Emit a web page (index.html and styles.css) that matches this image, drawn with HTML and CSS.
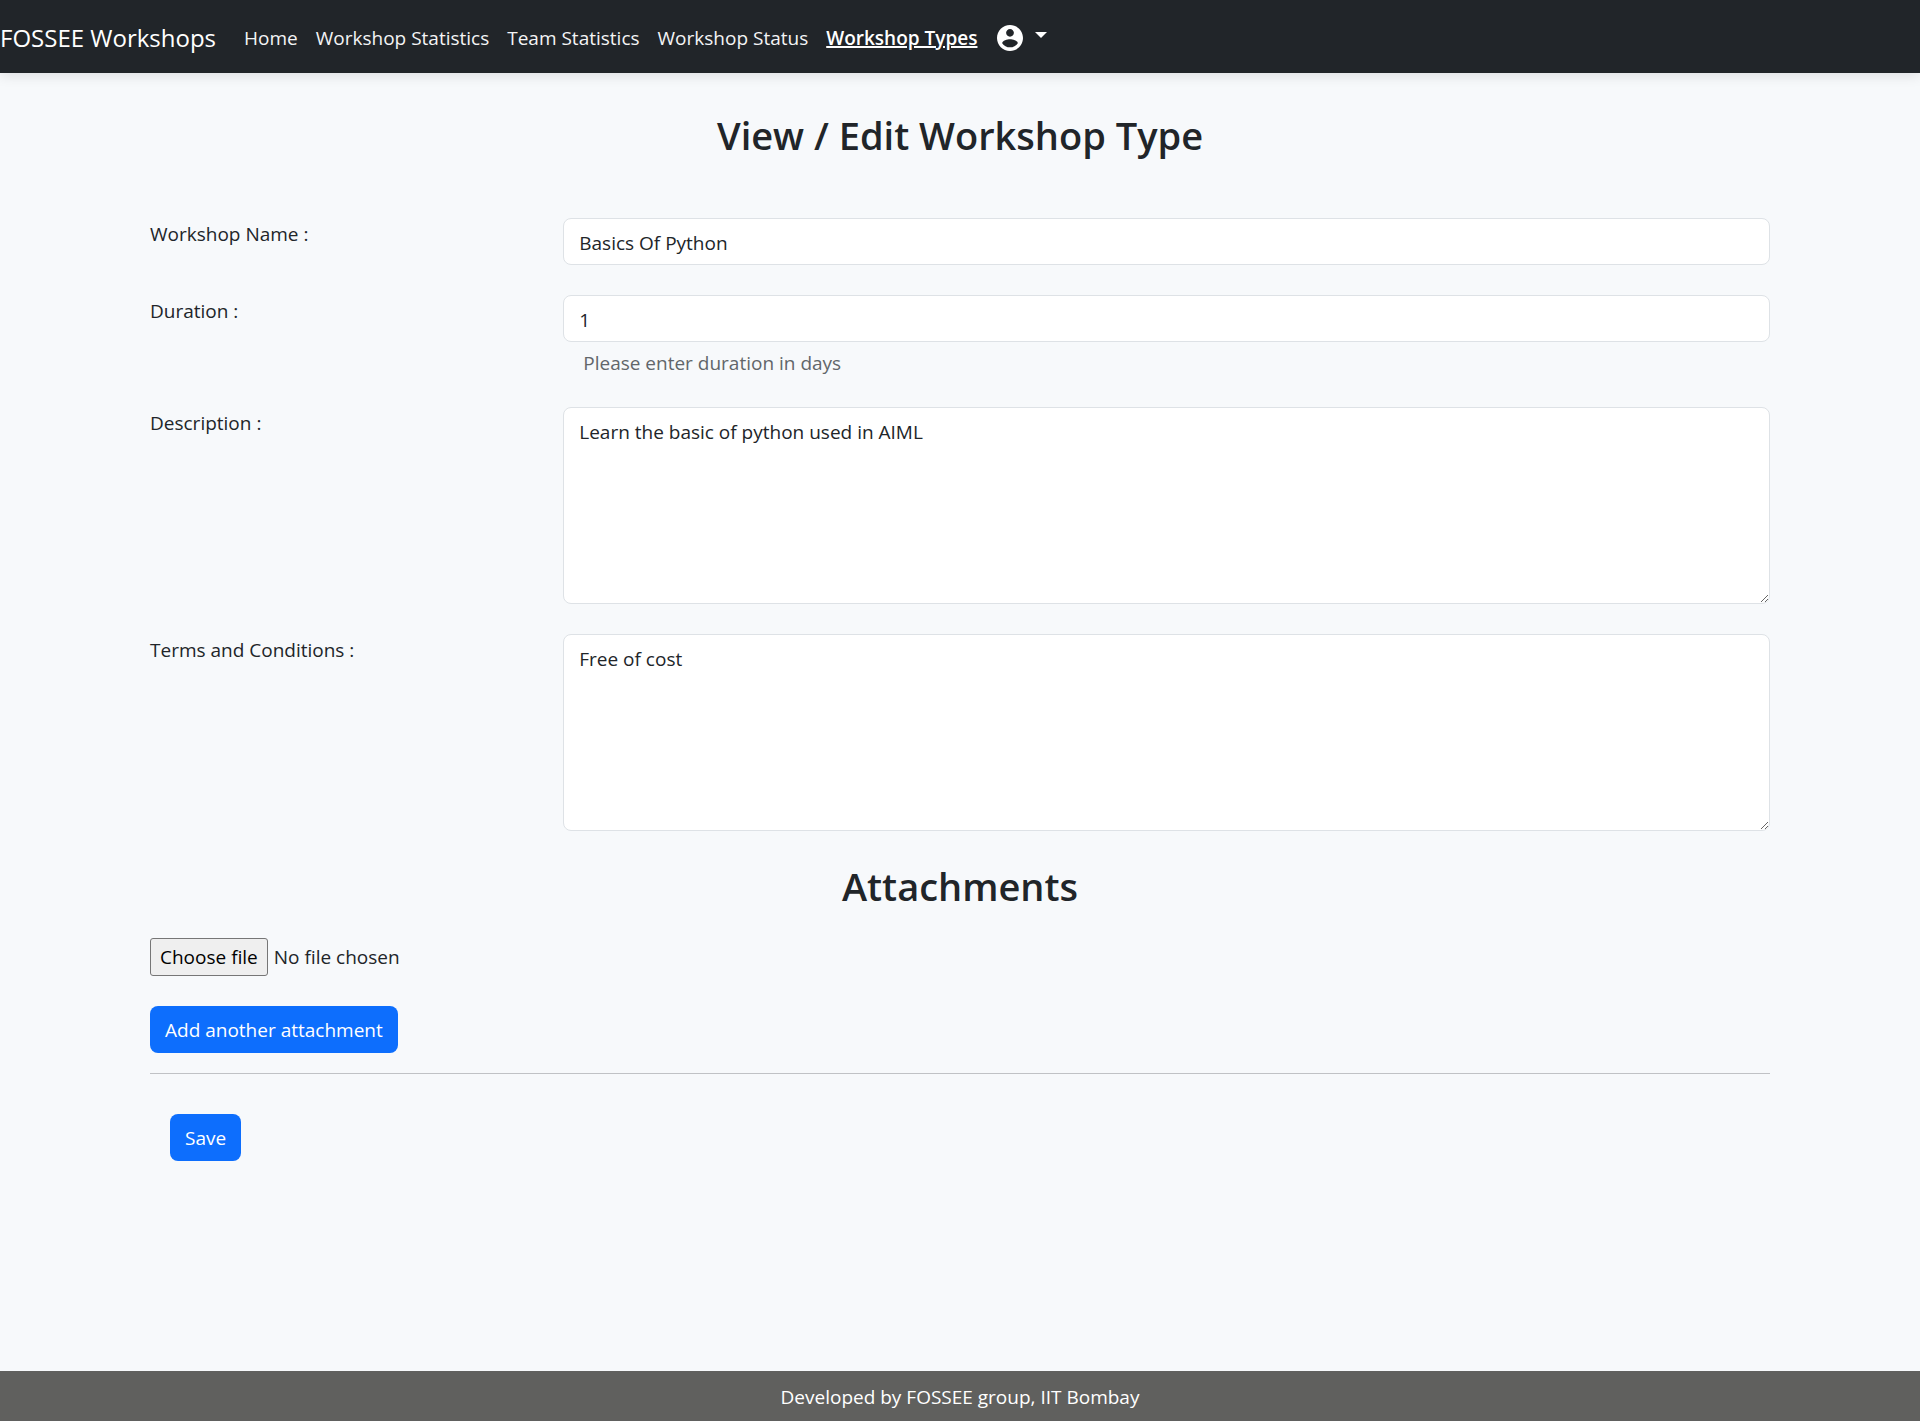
FILE: index.html
```html
<!DOCTYPE html>
<html lang="en-GB">
<head>
<meta charset="utf-8">
<meta name="viewport" content="width=device-width, initial-scale=1">
<title>View / Edit Workshop Type</title>
<link rel="stylesheet" href="styles.css">
</head>
<body>
<header class="navbar">
  <a class="brand" href="#">FOSSEE Workshops</a>
  <nav class="nav">
    <a class="nav-link" href="#">Home</a>
    <a class="nav-link" href="#">Workshop Statistics</a>
    <a class="nav-link" href="#">Team Statistics</a>
    <a class="nav-link" href="#">Workshop Status</a>
    <a class="nav-link active" href="#" aria-current="page">Workshop Types</a>
    <button class="account" type="button" aria-label="Account">
      <svg class="avatar" viewBox="2 2 20 20" aria-hidden="true"><path fill="currentColor" d="M12 2C6.48 2 2 6.48 2 12s4.48 10 10 10 10-4.48 10-10S17.52 2 12 2zm0 3c1.66 0 3 1.34 3 3s-1.34 3-3 3-3-1.34-3-3 1.340-3 3-3zm0 14.200c-2.500 0-4.710-1.280-6-3.220.030-1.990 4-3.080 6-3.080 1.990 0 5.970 1.090 6 3.080-1.290 1.940-3.500 3.220-6 3.220z"/></svg>
      <span class="caret"></span>
    </button>
  </nav>
</header>

<main class="page">
  <h1 class="title">View / Edit Workshop Type</h1>
  <form class="form">
    <div class="row">
      <label class="label" for="name">Workshop Name :</label>
      <input class="control" id="name" type="text" value="Basics Of Python">
    </div>
    <div class="row">
      <label class="label" for="duration">Duration :</label>
      <div class="field">
        <input class="control" id="duration" type="number" value="1" aria-describedby="duration-help">
        <span class="help" id="duration-help">Please enter duration in days</span>
      </div>
    </div>
    <div class="row">
      <label class="label" for="description">Description :</label>
      <textarea class="control area" id="description">Learn the basic of python used in AIML</textarea>
    </div>
    <div class="row">
      <label class="label" for="terms">Terms and Conditions :</label>
      <textarea class="control area" id="terms">Free of cost</textarea>
    </div>

    <h2 class="title">Attachments</h2>
    <label class="file" for="attachment">
      <input class="file-input" id="attachment" type="file">
      <span class="file-button">Choose file</span>
      <span>No file chosen</span>
    </label>
    <button class="button" type="button">Add another attachment</button>
    <hr class="rule">
    <button class="button save" type="submit">Save</button>
  </form>
</main>

<footer class="footer">Developed by FOSSEE group, IIT Bombay</footer>
</body>
</html>
```
FILE: styles.css
```css
* {
  box-sizing: border-box;
}

body {
  display: flex;
  flex-direction: column;
  min-height: 100vh;
  margin: 0;
  background: #f7f9fb;
  color: #212529;
  font: 19px/30px "Segoe UI", "Open Sans", sans-serif;
}

input,
textarea,
button {
  font: inherit;
  color: inherit;
}

.navbar {
  display: flex;
  align-items: center;
  gap: 28px;
  min-height: 73px;
  padding-top: 3px;
  background: #212529;
  box-shadow: 0 3px 12px rgba(0, 0, 0, 0.1);
  color: #fff;
}

.brand {
  color: inherit;
  font-size: 24px;
  text-decoration: none;
}

.nav {
  display: flex;
  align-items: center;
  gap: 18px;
}

.nav-link {
  color: #f4f4f5;
  text-decoration: none;
}

.nav-link.active {
  color: #fff;
  font-weight: 600;
  text-decoration: underline;
  text-decoration-thickness: 2px;
}

.account {
  display: flex;
  align-items: center;
  gap: 12px;
  padding: 0 2px;
  border: 0;
  background: none;
}

.avatar {
  width: 26px;
  height: 26px;
}

.caret {
  margin-bottom: 6px;
  border: 6px solid transparent;
  border-top-color: currentColor;
  border-bottom: 0;
}

.page {
  padding: 38px 150px 60px;
}

.title {
  margin: 0;
  font-size: 38px;
  font-weight: 600;
  line-height: 48px;
  text-align: center;
}

.form {
  display: flex;
  flex-direction: column;
  align-items: flex-start;
  padding-top: 59px;
}

.form .title {
  align-self: stretch;
  margin: 1px 0 28px;
}

.row {
  display: grid;
  grid-template-columns: 1fr 3fr;
  align-items: start;
  gap: 11px;
  width: 100%;
  margin-bottom: 30px;
}

.label {
  padding-top: 1px;
}

.control {
  display: block;
  width: 100%;
  height: 47px;
  padding: 9px 15px 7px;
  border: 1px solid #dee2e6;
  border-radius: 8px;
  background: #fff;
}

.control[type="number"] {
  appearance: textfield;
}

.area {
  height: 197px;
  resize: vertical;
}

.help {
  display: block;
  padding: 6px 20px 0;
  margin-bottom: -1px;
  color: #62666a;
}

.file {
  display: flex;
  align-items: center;
  gap: 6px;
  margin-bottom: 30px;
}

.file-input {
  position: absolute;
  width: 1px;
  height: 1px;
  opacity: 0;
}

.file-button {
  padding: 3px 9px;
  border: 1px solid #767676;
  border-radius: 3px;
  background: #efefef;
  color: #000;
}

.button {
  height: 47px;
  padding: 0 15px;
  border: 0;
  border-radius: 8px;
  background: #0d6efd;
  color: #fff;
}

.rule {
  width: 100%;
  margin: 20px 0 40px;
  border: 0;
  border-top: 1px solid #c0c2c5;
}

.save {
  margin-left: 20px;
}

.footer {
  margin-top: auto;
  padding: 11px 10px 9px;
  background: #60605e;
  color: #fff;
  text-align: center;
}
```
